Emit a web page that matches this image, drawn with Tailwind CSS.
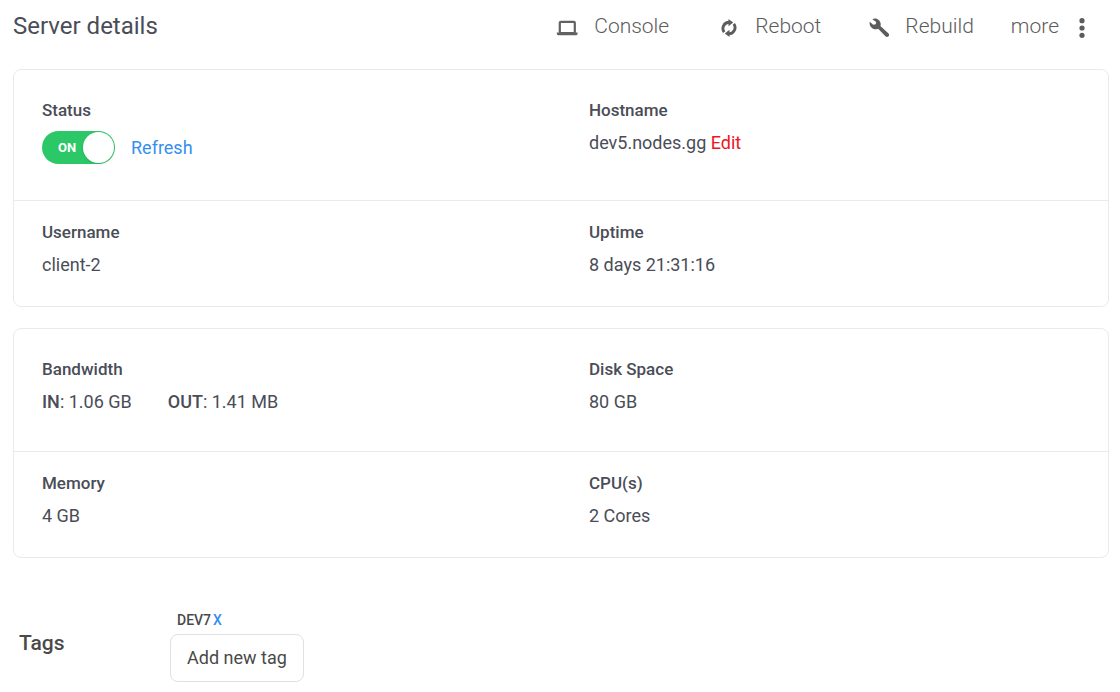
<!DOCTYPE html>
<html lang="en">
<head>
<meta charset="utf-8">
<meta name="viewport" content="width=device-width, initial-scale=1">
<title>Server details</title>
<script src="https://cdn.jsdelivr.net/npm/@tailwindcss/browser@4"></script>
</head>
<body class="bg-white font-['Roboto',sans-serif] text-lg leading-6 text-[#4a4d57]">
<main class="pl-[13px] pr-[11px]">
  <header class="flex h-[69px] items-start justify-between pt-[10px]">
    <h1 class="text-2xl leading-8">Server details</h1>
    <nav class="flex pr-[22px] text-[21px] leading-8 font-light text-[#5c5c5c]" aria-label="Server actions">
      <button class="mr-[52px] flex items-center gap-4">
        <svg class="mt-1 size-[22px]" viewBox="0 0 22 22" fill="none" aria-hidden="true"><rect x="3.8" y="4.8" width="15" height="11.4" rx="1" stroke="#626262" stroke-width="2.2"/><path d="M.8 15.4h20.8v1.4q0 1.4-1.4 1.4H2.2q-1.4 0-1.4-1.4z" fill="#626262"/></svg>
        Console
      </button>
      <button class="mr-[48px] flex items-center gap-[18px]">
        <svg class="mt-1 h-[18px] w-4" viewBox="0 0 16 18" fill="none" stroke="#5c5c5c" stroke-width="2.9" aria-hidden="true"><path d="M3.2 13.2A6.2 6.2 0 0 1 8.2 3.3M12.8 4.8A6.2 6.2 0 0 1 7.8 14.7"/><path d="M7.5 0 12.2 3.5 7.5 7.2zM8.5 10.8 3.8 14.5 8.5 18z" fill="#5c5c5c" stroke="none"/></svg>
        Reboot
      </button>
      <button class="mr-[37px] flex items-center gap-4">
        <svg class="mt-1 size-5" viewBox="0 0 20 20" aria-hidden="true"><path d="M3.3 1.2C5.4.1 8.2.4 10 2.2c1.7 1.7 2.1 3.9 1.4 5.9l7.9 7.2c1 .9 1 2.1.2 3s-2.2 1-3.1 0L9.2 10.7c-2.2 1-4.7.7-6.500-1C.9 8 .2 5.700.800 3.700l3.400 3.100 2.500-.5.500-2.200z" fill="#5c5c5c"/></svg>
        Rebuild
      </button>
      <button class="flex items-center gap-[18px]">
        more
        <svg class="mt-1 h-5 w-[10px]" viewBox="0 0 10 20" fill="#5c5c5c" aria-hidden="true"><circle cx="5" cy="2.7" r="2.6"/><circle cx="5" cy="10" r="2.6"/><circle cx="5" cy="17.3" r="2.6"/></svg>
      </button>
    </nav>
  </header>

  <section class="rounded-lg border border-[#e9eaec]" aria-label="Server status">
    <dl class="grid min-h-[131px] grid-cols-2 border-b border-[#e9eaec] pt-7">
      <div class="px-7">
        <dt class="text-[17px] leading-6 font-medium">Status</dt>
        <dd class="mt-[9px] flex items-center gap-4">
          <label class="relative flex h-[33px] w-[73px] items-center">
            <input type="checkbox" role="switch" aria-label="Server power" checked class="peer absolute inset-0 cursor-pointer appearance-none rounded-full bg-[#a8adb3] checked:bg-[#2cc767]">
            <span class="pointer-events-none relative pl-4 text-[13px] leading-4 font-bold text-white">ON</span>
            <span class="pointer-events-none absolute top-px left-px size-[31px] rounded-full bg-white shadow peer-checked:right-px peer-checked:left-auto"></span>
          </label>
          <a href="#" class="text-[#3490ee]">Refresh</a>
        </dd>
      </div>
      <div class="px-7">
        <dt class="text-[17px] leading-6 font-medium">Hostname</dt>
        <dd class="mt-[9px]">dev5.nodes.gg <a href="#" class="text-[#f0141e]">Edit</a></dd>
      </div>
    </dl>
    <dl class="grid grid-cols-2 pt-[19px] pb-[29px]">
      <div class="px-7">
        <dt class="text-[17px] leading-6 font-medium">Username</dt>
        <dd class="mt-[9px]">client-2</dd>
      </div>
      <div class="px-7">
        <dt class="text-[17px] leading-6 font-medium">Uptime</dt>
        <dd class="mt-[9px]">8 days 21:31:16</dd>
      </div>
    </dl>
  </section>

  <section class="mt-[21px] rounded-lg border border-[#e9eaec]" aria-label="Server resources">
    <dl class="grid grid-cols-2 border-b border-[#e9eaec] pt-7 pb-[37px]">
      <div class="px-7">
        <dt class="text-[17px] leading-6 font-medium">Bandwidth</dt>
        <dd class="mt-[9px] flex gap-9"><span><b class="font-medium">IN</b>: 1.06 GB</span><span><b class="font-medium">OUT</b>: 1.41 MB</span></dd>
      </div>
      <div class="px-7">
        <dt class="text-[17px] leading-6 font-medium">Disk Space</dt>
        <dd class="mt-[9px]">80 GB</dd>
      </div>
    </dl>
    <dl class="grid grid-cols-2 pt-[19px] pb-[29px]">
      <div class="px-7">
        <dt class="text-[17px] leading-6 font-medium">Memory</dt>
        <dd class="mt-[9px]">4 GB</dd>
      </div>
      <div class="px-7">
        <dt class="text-[17px] leading-6 font-medium">CPU(s)</dt>
        <dd class="mt-[9px]">2 Cores</dd>
      </div>
    </dl>
  </section>

  <section class="mt-[54px] flex pl-1.5 text-[#4a4a4a]">
    <h2 class="w-[151px] pt-[15px] text-[21px] leading-8 font-medium">Tags</h2>
    <div>
      <p class="flex h-[22px] items-start gap-0.5 pl-[7px] text-sm leading-4 font-medium">DEV7<button class="text-[#3490ee]" aria-label="Remove tag DEV7">X</button></p>
      <button class="h-12 rounded-lg border border-[#e0e1e3] px-4 text-lg leading-6">Add new tag</button>
    </div>
  </section>
</main>
</body>
</html>
